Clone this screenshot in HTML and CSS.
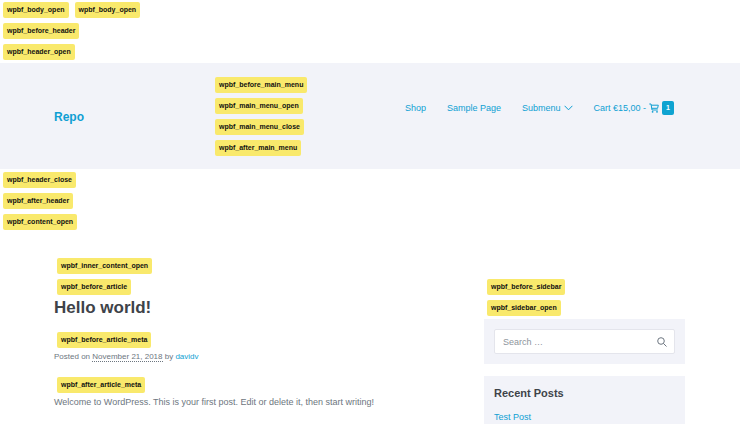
FILE: index.html
```html
<!DOCTYPE html>
<html lang="en">
<head>
    <meta charset="UTF-8">
    <meta name="viewport" content="width=device-width, initial-scale=1.0">
    <title>Hello world! - Repo</title>
    <link rel="stylesheet" href="styles.css">
</head>
<body>
    <div class="hooks">
        <div class="hook-row"><span class="hook">wpbf_body_open</span><span class="hook">wpbf_body_open</span></div>
        <div class="hook-row"><span class="hook">wpbf_before_header</span></div>
        <div class="hook-row"><span class="hook">wpbf_header_open</span></div>
    </div>
    <header class="header">
        <div class="container header-inner">
            <a class="logo" href="#">Repo</a>
            <div class="menu-hooks">
                <div class="hook-row"><span class="hook">wpbf_before_main_menu</span></div>
                <div class="hook-row"><span class="hook">wpbf_main_menu_open</span></div>
                <div class="hook-row"><span class="hook">wpbf_main_menu_close</span></div>
                <div class="hook-row"><span class="hook">wpbf_after_main_menu</span></div>
            </div>
            <nav class="menu">
                <a href="#">Shop</a>
                <a href="#">Sample Page</a>
                <a href="#">Submenu
                    <svg class="chevron" viewBox="0 0 9 6" aria-hidden="true"><path d="M0.6 0.8 L4.5 4.8 L8.4 0.8"/></svg>
                </a>
                <a href="#">Cart €15,00 -
                    <svg class="cart" viewBox="0 0 10 10" aria-hidden="true">
                        <path d="M0.3 1 H2 L3 7 H8.8 M2.2 2.2 H9.3 L8.6 5.3 H2.8"/>
                        <circle cx="3.6" cy="8.8" r="0.9"/>
                        <circle cx="8" cy="8.8" r="0.9"/>
                    </svg>
                    <span class="count">1</span>
                </a>
            </nav>
        </div>
    </header>
    <div class="hooks hooks-content">
        <div class="hook-row"><span class="hook">wpbf_header_close</span></div>
        <div class="hook-row"><span class="hook">wpbf_after_header</span></div>
        <div class="hook-row"><span class="hook">wpbf_content_open</span></div>
    </div>
    <div class="container content">
        <div class="hook-row"><span class="hook">wpbf_inner_content_open</span></div>
        <div class="columns">
            <main class="main">
                <div class="hook-row"><span class="hook">wpbf_before_article</span></div>
                <article>
                    <h1>Hello world!</h1>
                    <div class="hook-row"><span class="hook">wpbf_before_article_meta</span></div>
                    <p class="meta">Posted on <time datetime="2018-11-21">November 21, 2018</time> by <a href="#">davidv</a></p>
                    <div class="hook-row"><span class="hook">wpbf_after_article_meta</span></div>
                    <p class="entry">Welcome to WordPress. This is your first post. Edit or delete it, then start writing!</p>
                </article>
            </main>
            <aside class="sidebar">
                <div class="hook-row"><span class="hook">wpbf_before_sidebar</span></div>
                <div class="hook-row"><span class="hook">wpbf_sidebar_open</span></div>
                <div class="widget">
                    <form class="search">
                        <input type="search" placeholder="Search …" aria-label="Search">
                        <button type="submit" aria-label="Search">
                            <svg viewBox="0 0 10 10" aria-hidden="true"><circle cx="4" cy="4" r="3.3"/><path d="M6.4 6.4 L9.5 9.5"/></svg>
                        </button>
                    </form>
                </div>
                <div class="widget widget-posts">
                    <h2>Recent Posts</h2>
                    <a href="#">Test Post</a>
                </div>
            </aside>
        </div>
    </div>
</body>
</html>
```
FILE: styles.css
```css
body {
    font-family: "Liberation Sans", Arial, sans-serif;
    font-size: 9px;
    line-height: 14px;
    margin: 0;
    color: #6d7680;
    background-color: #fff;
}
a {
    color: #0f9fd3;
    text-decoration: none;
}
svg {
    fill: none;
    stroke: currentColor;
}
.container {
    margin: 0 58px 0 54px;
}
.hook-row {
    display: flex;
    gap: 6px;
    padding: 2px 3px 3px;
}
.hook {
    padding: 0 4px;
    border-radius: 2px;
    background-color: #f9e96c;
    color: #111;
    font-size: 7px;
    font-weight: bold;
    line-height: 16px;
}
.header {
    margin-right: 3px;
    padding: 12px 0 10px;
    background-color: #f2f3f9;
}
.header-inner {
    display: flex;
    align-items: center;
    margin-right: 66px;
}
.logo {
    width: 158px;
    font-size: 12px;
    font-weight: bold;
}
.menu {
    display: flex;
    gap: 21px;
    margin-left: auto;
    padding-bottom: 18px;
}
.menu a {
    display: flex;
    align-items: center;
    gap: 3px;
}
.chevron {
    width: 9px;
    height: 6px;
}
.cart {
    width: 10px;
    height: 10px;
}
.cart circle {
    fill: currentColor;
    stroke: none;
}
.count {
    padding: 0 4px;
    border-radius: 2px;
    background-color: #0fa3d1;
    color: #fff;
    font-size: 7px;
    font-weight: bold;
}
.hooks-content {
    padding-top: 1px;
}
.content {
    padding-top: 23px;
}
.columns {
    display: flex;
    justify-content: space-between;
}
.sidebar {
    width: 201px;
}
h1 {
    margin: 0 0 12px;
    color: #3e4349;
    font-size: 17px;
    line-height: 20px;
}
.meta {
    margin: 0 0 12px;
    font-size: 8px;
    line-height: 12px;
}
.meta time {
    border-bottom: 1px dotted #6d7680;
}
.entry {
    margin: 0;
    line-height: 12px;
}
.widget {
    margin-bottom: 12px;
    padding: 10px;
    background-color: #f2f3f9;
}
.widget h2 {
    margin: 0 0 10px;
    color: #3e4349;
    font-size: 11px;
    line-height: 14px;
}
.widget-posts {
    padding-bottom: 0;
}
.search {
    display: flex;
    border: 1px solid #e4e5ec;
    border-radius: 2px;
    background-color: #fff;
}
.search input {
    flex: 1;
    min-width: 0;
    height: 23px;
    padding: 0 8px;
    border: 0;
    background: none;
    font: inherit;
}
.search input::placeholder {
    color: #8d949c;
}
.search button {
    display: flex;
    align-items: center;
    padding: 0 7px;
    border: 0;
    background: none;
    color: #6d7680;
}
.search svg {
    width: 10px;
    height: 10px;
}
```
